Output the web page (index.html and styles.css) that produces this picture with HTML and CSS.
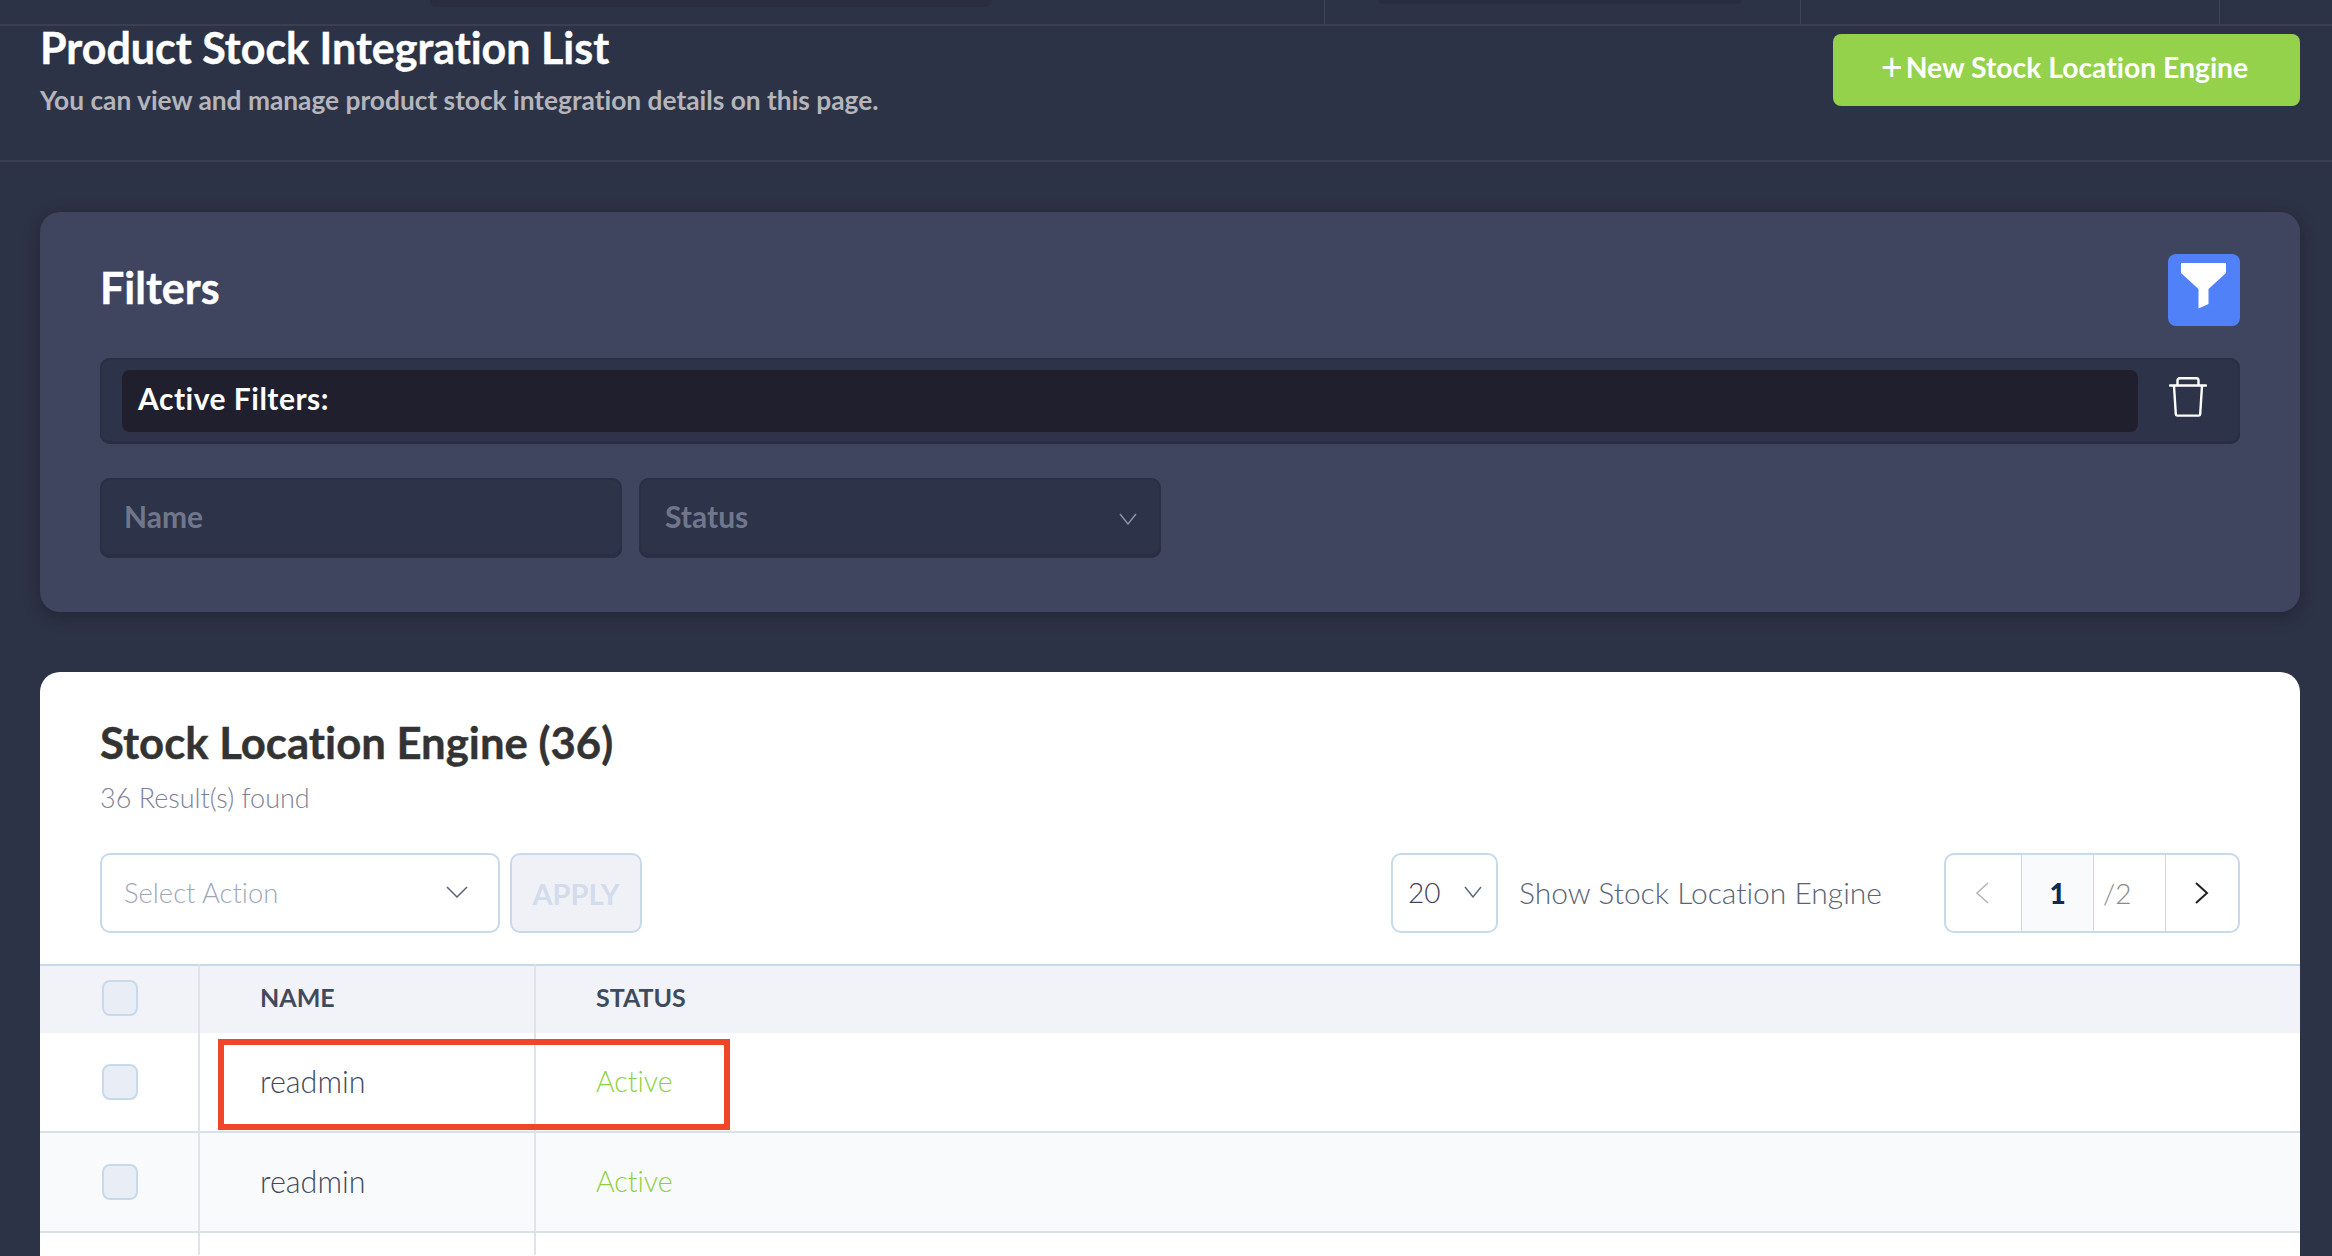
FILE: index.html
```html
<!DOCTYPE html>
<html lang="en">
<head>
<meta charset="utf-8">
<title>Product Stock Integration List</title>
<link rel="stylesheet" href="styles.css">
</head>
<body>
<div class="topbar">
  <div class="seg seg-a"><span class="pill pill-a"></span></div>
  <div class="seg seg-b"><span class="pill pill-b"></span></div>
  <div class="seg seg-c"></div>
  <div class="seg seg-d"></div>
</div>
<header class="page-head">
  <div class="head-text">
    <h1>Product Stock Integration List</h1>
    <p>You can view and manage product stock integration details on this page.</p>
  </div>
  <button class="new-btn"><span class="plus">+</span> New Stock Location Engine</button>
</header>
<main class="content">
  <section class="filters">
    <div class="filters-top">
      <h2>Filters</h2>
      <span class="funnel-btn">
        <svg width="72" height="72" viewBox="0 0 72 72"><polygon points="13,9 58,9 58,19 40.5,35 40.5,50 30.5,54.5 30.5,35 13,19" fill="#fff"/></svg>
      </span>
    </div>
    <div class="active-row">
      <div class="active-bar">Active Filters:</div>
      <span class="trash">
        <svg width="38" height="40" viewBox="0 0 38 40" fill="none" stroke="#fff" stroke-width="2.4" stroke-linejoin="round" stroke-linecap="round"><path d="M1 8.500H37"/><path d="M5 9L6.800 37a1.600 1.600 0 0 0 1.600 1.600H29.600a1.600 1.600 0 0 0 1.600-1.600L33 9"/><path d="M8.500 8V3.500A2.200 2.200 0 0 1 10.700 1.300H27.300A2.200 2.200 0 0 1 29.500 3.500V8"/></svg>
      </span>
    </div>
    <div class="filter-fields">
      <div class="field">Name</div>
      <div class="field field-select">Status
        <svg class="chev" width="18" height="12" viewBox="0 0 18 12" fill="none" stroke="#8f96a8" stroke-width="1.400"><path d="M1 1L9 11L17 1"/></svg>
      </div>
    </div>
  </section>
  <section class="list">
    <h2>Stock Location Engine (36)</h2>
    <p class="found">36 Result(s) found</p>
    <div class="toolbar">
      <div class="select-action">Select Action
        <svg width="22" height="12" viewBox="0 0 22 12" fill="none" stroke="#5a6478" stroke-width="1.500"><path d="M1 1L11 11L21 1"/></svg>
      </div>
      <button class="apply">APPLY</button>
      <div class="per-page">20
        <svg width="18" height="12" viewBox="0 0 18 12" fill="none" stroke="#5a6478" stroke-width="1.400"><path d="M1 1L9 11L17 1"/></svg>
      </div>
      <span class="show-label">Show Stock Location Engine</span>
      <div class="pager">
        <span class="pg pg-prev"><svg width="14" height="22" viewBox="0 0 14 22" fill="none" stroke="#b5b5c3" stroke-width="1.600"><path d="M13 1L2 11L13 21"/></svg></span>
        <span class="pg pg-cur">1</span>
        <span class="pg pg-total">/2</span>
        <span class="pg pg-next"><svg width="14" height="22" viewBox="0 0 14 22" fill="none" stroke="#222" stroke-width="2"><path d="M1 1L12 11L1 21"/></svg></span>
      </div>
    </div>
    <div class="table-wrap">
      <table class="grid">
        <thead>
          <tr><th class="c-check"><span class="box"></span></th><th class="c-name">NAME</th><th>STATUS</th></tr>
        </thead>
        <tbody>
          <tr class="r1"><td class="c-check"><span class="box"></span></td><td class="c-name">readmin</td><td class="ok">Active</td></tr>
          <tr class="r2"><td class="c-check"><span class="box"></span></td><td class="c-name">readmin</td><td class="ok">Active</td></tr>
          <tr class="r3"><td class="c-check"></td><td class="c-name"></td><td></td></tr>
        </tbody>
      </table>
      <div class="highlight"></div>
    </div>
  </section>
</main>
</body>
</html>
```
FILE: styles.css
```css
* { box-sizing: border-box; }
html, body { margin: 0; height: 1256px; overflow: hidden; }
body { background: #2d3346; font-family: Lato, "Open Sans", sans-serif; font-variant-ligatures: none; color: #fff; }
h1, h2, p { margin: 0; }
button { font-family: inherit; font-variant-ligatures: none; cursor: pointer; }

.topbar { display: flex; height: 26px; border-bottom: 2px solid #3a4052; }
.seg { height: 24px; border-right: 1px solid #3f4557; }
.seg-a { width: 1325px; padding-left: 430px; }
.seg-b { width: 476px; padding-left: 53px; }
.seg-c { width: 419px; }
.seg-d { flex: 1; border-right: 0; }
.pill { display: block; background: #282d3f; border-radius: 0 0 14px 14px; }
.pill-a { width: 562px; height: 7px; }
.pill-b { width: 364px; height: 4px; }

.page-head { display: flex; justify-content: space-between; align-items: flex-start; height: 136px; padding: 0 32px 0 40px; border-bottom: 2px solid #3a4052; }
.head-text h1 { font-size: 43px; line-height: 44px; font-weight: 700; -webkit-text-stroke: 0.4px #fff; }
.head-text p { margin-top: 15px; font-size: 26.3px; line-height: 30px; font-weight: 700; color: #b5b5bb; }
.new-btn { width: 467px; height: 72px; margin-top: 8px; border: 0; border-radius: 8px; background: #93d24a; color: #fff; font-size: 28.3px; font-weight: 700; padding: 0 4px 6px 0; white-space: nowrap; }
.plus { font-size: 38px; line-height: 20px; font-weight: 400; vertical-align: -2px; margin-right: -4px; }

.content { padding: 50px 32px 0 40px; }
.filters { height: 400px; padding: 42px 60px 0; border-radius: 20px; background: #3f455f; box-shadow: 0 4px 16px rgba(16, 18, 28, 0.4); }
.filters-top { display: flex; justify-content: space-between; height: 104px; }
.filters-top h2 { font-size: 43px; line-height: 48px; margin-top: 10px; font-weight: 700; -webkit-text-stroke: 0.4px #fff; }
.funnel-btn { display: block; width: 72px; height: 72px; border-radius: 8px; background: #5181f8; }
.funnel-btn svg { display: block; }
.active-row { display: flex; align-items: center; height: 86px; padding: 0 0 0 22px; background: #2d3348; border-radius: 10px; box-shadow: inset 0 0 0 2px #2a2f45, inset 0 -3px 0 #2a2f45; }
.active-bar { width: 2016px; height: 62px; padding-left: 16px; border-radius: 8px; background: #1f1f2e; font-size: 30px; line-height: 57px; font-weight: 700; letter-spacing: 0.5px; }
.trash { margin: -8px 0 0 31px; height: 40px; }
.trash svg { display: block; }
.filter-fields { display: flex; gap: 17px; margin-top: 34px; }
.field { position: relative; display: flex; align-items: center; justify-content: space-between; width: 522px; height: 80px; padding: 0 24px 4px; border-radius: 10px; background: #2d3348; box-shadow: inset 0 0 0 2px #2a2f45, inset 0 -4px 0 #2a2f45; color: #70778c; font-size: 30px; font-weight: 700; }
.field-select { padding: 0 24px 4px 26px; }
.field-select .chev { margin: 6px 0 0; }

.list { height: 584px; margin-top: 60px; overflow: hidden; background: #fff; border-radius: 20px 20px 0 0; color: #333; }
.list h2 { padding: 44px 60px 0; font-size: 43.7px; line-height: 52px; font-weight: 700; color: #333; -webkit-text-stroke: 0.4px #333; }
.found { padding: 14px 60px 0; font-size: 27px; line-height: 32px; font-weight: 300; color: #7e8299; }
.toolbar { display: flex; align-items: center; height: 80px; margin-top: 39px; padding: 0 60px; }
.select-action { display: flex; align-items: center; justify-content: space-between; width: 400px; height: 80px; padding: 0 30px 2px 22px; border: 2px solid #c9d9ec; border-radius: 10px; color: #a0a8b8; font-size: 27.400px; font-weight: 300; }
.apply { width: 132px; height: 80px; margin-left: 10px; border: 2px solid #c9d9ec; border-radius: 10px; background: #eff1f6; color: #d3dcec; font-size: 29px; font-weight: 700; }
.per-page { display: flex; align-items: center; justify-content: space-between; width: 107px; height: 80px; margin-left: auto; padding: 0 14px 2px 15px; border: 2px solid #c9d9ec; border-radius: 10px; color: #3f4254; font-size: 28px; font-weight: 300; }
.show-label { margin-left: 21px; padding-bottom: 2px; font-size: 30px; font-weight: 300; color: #5a6478; }
.pager { display: flex; width: 296px; height: 80px; margin-left: 62px; border: 2px solid #c9d9ec; border-radius: 10px; overflow: hidden; }
.pg { display: flex; align-items: center; justify-content: center; width: 72px; border-left: 1px solid #c9d9ec; font-size: 28px; }
.pg-prev { width: 75px; border-left: 0; padding-right: 4px; }
.pg-cur { background: #f9fafc; color: #0e2a4d; font-weight: 900; }
.pg-total { color: #8a8a8a; font-weight: 300; justify-content: flex-start; padding-left: 9px; }
.pg-next { flex: 1; }

.table-wrap { position: relative; margin-top: 31px; }
.grid { width: 100%; border-collapse: separate; border-spacing: 0; table-layout: fixed; }
.grid th { height: 69px; padding: 0 0 6px 60px; border-top: 2px solid #c9d9ec; background: #f1f3f8; color: #3f4a5c; font-size: 25px; font-weight: 700; text-align: left; }
.grid th, .grid td { border-left: 2px solid #dde5ea; }
.grid th:first-child, .grid td:first-child { border-left: 0; }
.grid td { padding: 0 0 2px 60px; border-bottom: 2px solid #d7e1e6; font-size: 30.500px; font-weight: 300; color: #3f4a5c; }
.grid .c-check { width: 158px; padding: 0 0 0 62px; }
.grid th.c-check { padding-bottom: 4px; }
.grid .c-name { width: 336px; }
.r1 td { height: 100px; }
.r2 td { height: 100px; background: #f9fafc; }
.r3 td { height: 22px; border-bottom: 0; }
.grid td.ok { color: #8ed140; font-size: 28.500px; }
.box { display: block; width: 36px; height: 36px; border: 2px solid #c9d9ec; border-radius: 8px; background: #e9eef6; }
.highlight { position: absolute; left: 178px; top: 75px; width: 512px; height: 91px; border: 6px solid #ef4529; }
```
